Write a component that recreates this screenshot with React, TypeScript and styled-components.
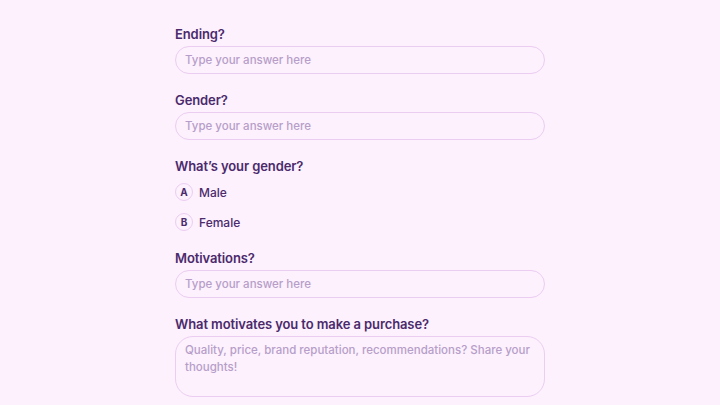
import React from 'react';
import styled, { createGlobalStyle } from 'styled-components';

const GlobalStyle = createGlobalStyle`
  html, body {
    margin: 0;
    padding: 0;
    background: #fcf1fd;
  }
  body {
    font-family: Inter, "Noto Sans", sans-serif;
  }
`;

const Page = styled.div`
  width: 720px;
  height: 405px;
  overflow: hidden;
  display: flex;
  justify-content: center;
  background: #fcf1fd;
`;

const Form = styled.div`
  width: 370px;
  padding-top: 24px;
  display: flex;
  flex-direction: column;
  gap: 16px;
`;

const Field = styled.div`
  display: flex;
  flex-direction: column;
`;

const Label = styled.div`
  height: 20px;
  line-height: 20px;
  font-size: 13px;
  font-weight: 600;
  color: #4b2a6c;
  letter-spacing: -0.1px;
`;

const Input = styled.input`
  box-sizing: border-box;
  margin-top: 2px;
  height: 28px;
  width: 100%;
  border: 1px solid #ebcdf1;
  border-radius: 14px;
  background: transparent;
  padding: 0 9px;
  font-family: inherit;
  font-size: 11.5px;
  font-weight: 500;
  color: #4b2a6c;
  outline: none;
  &::placeholder {
    color: #b79ec9;
  }
`;

const TextArea = styled.textarea`
  box-sizing: border-box;
  margin-top: 2px;
  height: 61px;
  width: 100%;
  border: 1px solid #ebcdf1;
  border-radius: 18px;
  background: transparent;
  padding: 5px 8px 4px 9px;
  font-family: inherit;
  font-size: 11.5px;
  font-weight: 500;
  line-height: 17px;
  color: #4b2a6c;
  resize: none;
  outline: none;
  &::placeholder {
    color: #b79ec9;
  }
`;

const Options = styled.div`
  margin-top: 7px;
  padding-bottom: 1px;
  display: flex;
  flex-direction: column;
  gap: 12px;
`;

const Option = styled.div`
  display: flex;
  align-items: center;
  gap: 6px;
  height: 18px;
`;

const Key = styled.span`
  box-sizing: border-box;
  width: 18px;
  height: 18px;
  border: 1px solid #ebcdf1;
  border-radius: 50%;
  display: flex;
  align-items: center;
  justify-content: center;
  font-size: 10px;
  font-weight: 700;
  color: #4b2a6c;
`;

const OptionText = styled.span`
  font-size: 12px;
  font-weight: 500;
  color: #4b2a6c;
`;

const App = () => {
  return (
    <>
      <GlobalStyle />
      <Page>
        <Form>
          <Field>
            <Label>Ending?</Label>
            <Input placeholder="Type your answer here" />
          </Field>
          <Field>
            <Label>Gender?</Label>
            <Input placeholder="Type your answer here" />
          </Field>
          <Field>
            <Label>What’s your gender?</Label>
            <Options>
              <Option>
                <Key>A</Key>
                <OptionText>Male</OptionText>
              </Option>
              <Option>
                <Key>B</Key>
                <OptionText>Female</OptionText>
              </Option>
            </Options>
          </Field>
          <Field>
            <Label>Motivations?</Label>
            <Input placeholder="Type your answer here" />
          </Field>
          <Field>
            <Label>What motivates you to make a purchase?</Label>
            <TextArea placeholder="Quality, price, brand reputation, recommendations? Share your thoughts!" />
          </Field>
        </Form>
      </Page>
    </>
  );
};

export default App;
